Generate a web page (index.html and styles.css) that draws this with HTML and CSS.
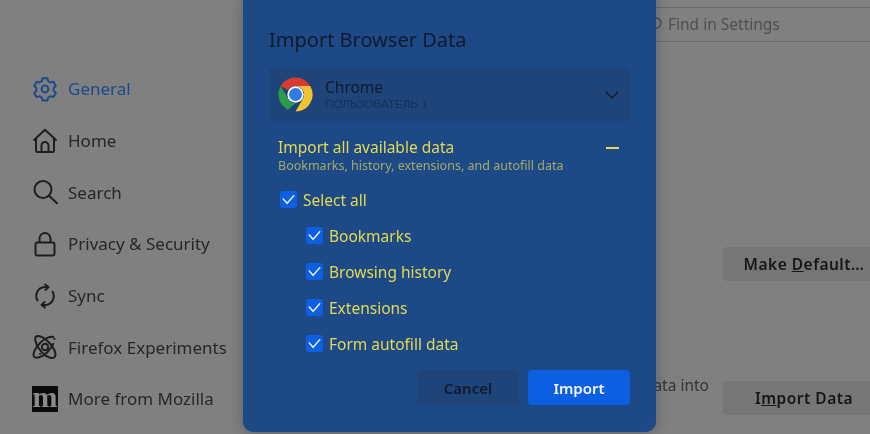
FILE: index.html

```html
<!DOCTYPE html>
<html lang="en">
<head>
    <meta charset="UTF-8">
    <title>Import Browser Data</title>
    <link rel="stylesheet" href="styles.css">
</head>
<body>
    <div class="page">
        <nav class="sidenav">
            <a class="navitem active">
                <svg class="navicon" viewBox="0 0 26 26"><path d="M10.6 2.2h4.8l.8 3 2.2 1.3 3-.8 2.4 4.2-2.2 2.2v2.6l2.2 2.2-2.4 4.2-3-.8-2.2 1.3-.8 3h-4.8l-.8-3-2.2-1.3-3 .8-2.4-4.2 2.2-2.2v-2.6L2.2 9.9l2.4-4.2 3 .8 2.2-1.3z" stroke-linejoin="round"/><circle cx="13" cy="13" r="3.4"/></svg>
                General
            </a>
            <a class="navitem">
                <svg class="navicon" viewBox="0 0 26 26"><path d="M1.5 12.5 13 1.8l11.5 10.7M4 10.5v12a1.5 1.5 0 0 0 1.5 1.5h15a1.5 1.5 0 0 0 1.5-1.5v-12M9.5 24v-6.5a3.5 3.5 0 0 1 7 0V24" stroke-linejoin="round"/></svg>
                Home
            </a>
            <a class="navitem">
                <svg class="navicon" viewBox="0 0 26 26"><circle cx="11" cy="10.5" r="8.5"/><path d="m17 16.7 8 7.5" stroke-linecap="round"/></svg>
                Search
            </a>
            <a class="navitem">
                <svg class="navicon" viewBox="0 0 26 26"><rect x="3.5" y="11.5" width="19" height="13" rx="2"/><path d="M7.5 11.5V7.5a5.5 5.5 0 0 1 11 0v4"/></svg>
                Privacy &amp; Security
            </a>
            <a class="navitem">
                <svg class="navicon" viewBox="0 0 26 26"><path d="M5.5 17.5a9 9 0 0 1 7-13.5h3M20.500 8.500a9 9 0 0 1-7 13.500h-3" stroke-linecap="round"/><path d="m12.500 1 4 3-3.500 3.500M13.500 25l-4-3 3.500-3.500" stroke-linejoin="round"/></svg>
                Sync
            </a>
            <a class="navitem">
                <svg class="navicon" viewBox="0 0 26 26"><path d="M4 2.500c3-1.500 8 1 13 6s7.500 11 6 14-7.500 1.500-12.500-3.500S1.500 5 4 2.500z"/><path d="M22 3.500C19 1.500 13 4 8 9s-7.500 11-6 13.500 8 1 13-4c3-3 5.500-6.500 6.500-9.500"/><circle cx="13" cy="13" r="3.200"/><circle cx="22.500" cy="5" r="1" class="dot"/><circle cx="8" cy="20" r="1" class="dot"/></svg>
                Firefox Experiments
            </a>
            <a class="navitem">
                <span class="mozlogo">m</span>
                More from Mozilla
            </a>
        </nav>

        <main class="content">
            <div class="searchbar">
                <svg class="searchicon" viewBox="0 0 14 14"><circle cx="6" cy="6" r="5"/></svg>
                Find in Settings
            </div>
            <div class="settingrow first">
                <button class="greybtn">Make <u>D</u>efault…</button>
            </div>
            <div class="settingrow second">
                <span class="rowtext">ata into</span>
                <button class="greybtn">I<u>m</u>port Data</button>
            </div>
        </main>
    </div>

    <div class="dialog">
        <h1>Import Browser Data</h1>

        <div class="picker">
            <svg class="chromeicon" viewBox="0 0 36 36">
                <path d="M18 0.500a17.500 17.500 0 0 1 15.200 8.750H18a8.750 8.750 0 0 0-7.600 4.400L2.800 9.250A17.500 17.500 0 0 1 18 0.500z" fill="#d93a2f"/>
                <path d="M2.800 9.250l7.600 13.150a8.750 8.750 0 0 0 7.600 4.350L10.400 33.700A17.500 17.500 0 0 1 2.800 9.250z" fill="#2f9a4c"/>
                <path d="M33.200 9.250A17.500 17.500 0 0 1 18 35.500l7.600-13.100A8.750 8.750 0 0 0 18 9.250z" fill="#f2c230"/>
                <circle cx="18" cy="18" r="8.400" fill="#fff"/>
                <circle cx="18" cy="18" r="6.700" fill="#2f7be6"/>
            </svg>
            <div class="pickertext">
                <div class="pickername">Chrome</div>
                <div class="pickerprofile">ПОЛЬЗОВАТЕЛЬ 1</div>
            </div>
            <svg class="chevron" viewBox="0 0 14 8"><path d="m1 1 6 6 6-6"/></svg>
        </div>

        <div class="summary">
            <div>
                <div class="summarytitle">Import all available data</div>
                <div class="summarysub">Bookmarks, history, extensions, and autofill data</div>
            </div>
            <span class="minus"></span>
        </div>

        <div class="checks">
            <label class="check"><span class="box"><svg viewBox="0 0 18 18"><path d="m3 8 4.500 5L15 4.500"/></svg></span>Select all</label>
            <label class="check child"><span class="box"><svg viewBox="0 0 18 18"><path d="m3 8 4.500 5L15 4.500"/></svg></span>Bookmarks</label>
            <label class="check child"><span class="box"><svg viewBox="0 0 18 18"><path d="m3 8 4.500 5L15 4.500"/></svg></span>Browsing history</label>
            <label class="check child"><span class="box"><svg viewBox="0 0 18 18"><path d="m3 8 4.500 5L15 4.500"/></svg></span>Extensions</label>
            <label class="check child"><span class="box"><svg viewBox="0 0 18 18"><path d="m3 8 4.500 5L15 4.500"/></svg></span>Form autofill data</label>
        </div>

        <div class="actions">
            <button class="btn cancel">Cancel</button>
            <button class="btn primary">Import</button>
        </div>
    </div>
</body>
</html>
```

FILE: styles.css

```css
* {
    box-sizing: border-box;
}

html, body {
    margin: 0;
    height: 100%;
    overflow: hidden;
}

body {
    font-family: "Noto Sans", "Open Sans", sans-serif;
    background-color: #808080;
    color: #1c1b22;
    position: relative;
}

.page {
    display: flex;
    height: 434px;
    filter: blur(0.4px);
}

.sidenav {
    width: 640px;
    padding: 63px 0 0 32px;
    display: flex;
    flex-direction: column;
    gap: 0;
}

.navitem {
    display: flex;
    align-items: center;
    gap: 10px;
    height: 51.7px;
    font-size: 17px;
    color: #26262a;
}

.navitem.active {
    color: #1c4a8c;
}

.navicon {
    width: 26px;
    height: 26px;
    fill: none;
    stroke: #1e1e22;
    stroke-width: 2;
    flex: none;
}

.navicon .dot {
    fill: #1e1e22;
    stroke: none;
}

.active .navicon {
    stroke: #1c4a8c;
}

.mozlogo {
    width: 26px;
    height: 26px;
    flex: none;
    background: #0b0b0d;
    color: #8a8a8a;
    font-family: "Liberation Serif", serif;
    font-weight: bold;
    font-size: 30px;
    line-height: 22px;
    text-align: center;
}

.content {
    flex: 1;
    min-width: 0;
    display: flex;
    flex-direction: column;
}

.searchbar {
    margin-top: 7px;
    height: 35px;
    display: flex;
    align-items: center;
    gap: 4px;
    padding: 0 0 2px 10px;
    border-top: 1px solid #6b6b6b;
    border-bottom: 1px solid #6b6b6b;
    font-size: 15.500px;
    color: #4f4f4f;
}

.searchicon {
    width: 14px;
    height: 14px;
    fill: none;
    stroke: #4f4f4f;
    stroke-width: 1.500;
}

.settingrow {
    display: flex;
    justify-content: flex-end;
    align-items: center;
    gap: 14px;
    margin-right: -15px;
}

.settingrow.first {
    margin-top: 205px;
}

.settingrow.second {
    margin-top: 93px;
}

.rowtext {
    font-size: 15.500px;
    color: #333336;
    margin-bottom: 26px;
}

.greybtn {
    width: 162px;
    height: 34px;
    flex: none;
    border: 0;
    border-radius: 4px;
    background: #767676;
    color: #161618;
    font-family: inherit;
    font-size: 15.500px;
    font-weight: 600;
    letter-spacing: 0.5px;
    text-align: center;
    padding: 0;
    white-space: nowrap;
}

.dialog {
    position: absolute;
    left: 243px;
    top: -10px;
    width: 413px;
    height: 442px;
    padding: 36px 26px 0;
    border-radius: 10px;
    background: #1e4987;
    box-shadow: 0 2px 14px rgba(0, 0, 0, 0.25);
    color: #e2da50;
    filter: blur(0.3px);
}

.dialog h1 {
    margin: 0;
    font-size: 20px;
    font-weight: 400;
    line-height: 28px;
    color: #111a2e;
}

.picker {
    margin-top: 14px;
    height: 53px;
    width: 361px;
    display: flex;
    align-items: center;
    padding: 0 10px 0 9px;
    border-radius: 4px;
    background: #1e4479;
}

.chromeicon {
    width: 35px;
    height: 35px;
    flex: none;
}

.pickertext {
    margin-left: 12px;
    flex: 1;
}

.pickername {
    font-size: 15.500px;
    line-height: 19px;
    color: #111a2e;
}

.pickerprofile {
    font-family: "Liberation Sans", sans-serif;
    font-size: 11.700px;
    line-height: 14px;
    color: #16305a;
}

.chevron {
    width: 14px;
    height: 8px;
    fill: none;
    stroke: #111a2e;
    stroke-width: 1.500;
    margin-right: 1px;
}

.summary {
    margin: 17px 11px 0 9px;
    display: flex;
    justify-content: space-between;
}

.summarytitle {
    font-size: 15.500px;
    line-height: 19px;
}

.summarysub {
    font-size: 12.500px;
    line-height: 17px;
    color: #a3ab6a;
}

.minus {
    width: 13px;
    height: 2px;
    margin-top: 9px;
    background: #e2da50;
}

.checks {
    margin: 17px 0 0 11px;
    display: flex;
    flex-direction: column;
    gap: 19px;
}

.check {
    display: flex;
    align-items: center;
    gap: 6px;
    height: 17px;
    font-size: 15.500px;
}

.check.child {
    margin-left: 26px;
}

.box {
    width: 17px;
    height: 17px;
    border-radius: 3px;
    background: #0b5fe0;
    flex: none;
}

.box svg {
    display: block;
    fill: none;
    stroke: #dfe9fb;
    stroke-width: 1.600;
}

.actions {
    margin-top: 18px;
    display: flex;
    justify-content: flex-end;
    gap: 9px;
}

.btn {
    width: 102px;
    height: 35px;
    border: 0;
    border-radius: 4px;
    font-family: inherit;
    font-size: 15px;
    font-weight: 600;
}

.cancel {
    background: #1e4479;
    color: #111a2e;
}

.primary {
    background: #0b5fe0;
    color: #f2f5fc;
}
```
